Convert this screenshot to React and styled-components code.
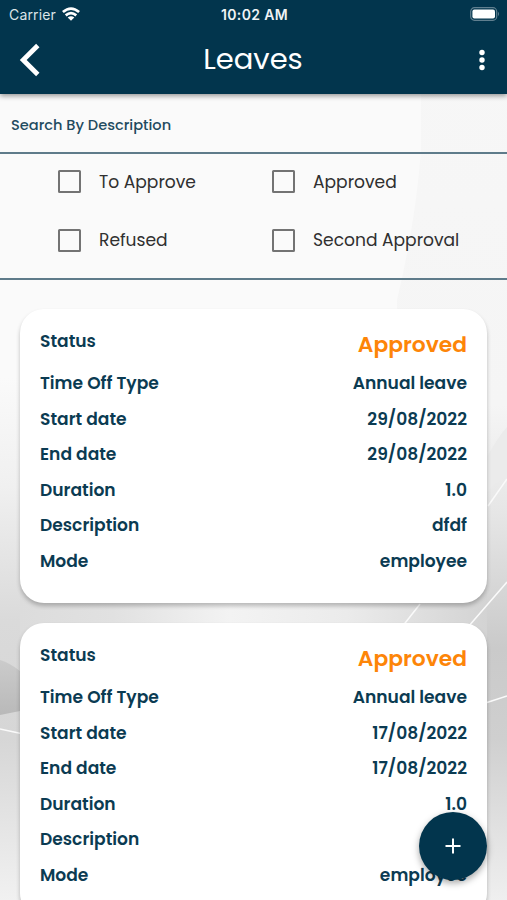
import React from 'react';
import styled, {createGlobalStyle} from 'styled-components';

const GlobalStyle = createGlobalStyle`
  * {
    box-sizing: border-box;
  }

  body {
    margin: 0;
    background-color: #FAFAFA;
    font-family: Poppins, Inter, "Open Sans", sans-serif;
  }
`;

const Screen = styled.div`
  position: relative;
  height: 900px;
  overflow: hidden;
  display: flex;
  flex-direction: column;
`;

const Backdrop = styled.svg`
  position: absolute;
  top: 0;
  left: 0;
  width: 507px;
  height: 900px;
`;

const Header = styled.div`
  position: relative;
  height: 94px;
  flex: none;
  background-color: #02354D;
  color: white;
  box-shadow: 0 2px 5px rgba(0, 0, 0, 0.4);
`;

const StatusBar = styled.div`
  height: 28px;
  padding: 0 7px 0 9px;
  display: grid;
  grid-template-columns: 1fr auto 1fr;
  align-items: center;
  font-family: Inter, Roboto, sans-serif;
`;

const Carrier = styled.div`
  display: flex;
  align-items: center;
  gap: 6px;
  font-size: 14px;
  letter-spacing: 0.15px;
  color: #DCE4E8;
`;

const Clock = styled.div`
  font-size: 14px;
  font-weight: 600;
  letter-spacing: 0.35px;
  color: #F0F3F5;
`;

const BatteryIcon = styled.svg`
  justify-self: end;
`;

const TitleBar = styled.div`
  height: 62px;
  padding: 1px 20px 0 19px;
  display: grid;
  grid-template-columns: 1fr auto 1fr;
  align-items: center;
`;

const Title = styled.div`
  font-size: 29px;
`;

const MenuIcon = styled.svg`
  justify-self: end;
`;

const Search = styled.div`
  position: relative;
  height: 60px;
  flex: none;
  padding: 4px 11px 0;
  display: flex;
  align-items: center;
  border-bottom: 2px solid #5E7B8A;
  font-size: 14.6px;
  font-weight: 500;
  color: #1F4B60;
`;

const Filters = styled.div`
  position: relative;
  height: 126px;
  flex: none;
  padding: 0 0 9px 58px;
  display: grid;
  grid-template-columns: 214px 1fr;
  grid-template-rows: 55px 62px;
  align-items: center;
  border-bottom: 2px solid #5E7B8A;
`;

const Filter = styled.div`
  display: flex;
  align-items: center;
  gap: 18px;
  font-size: 17.1px;
  color: #303030;
`;

const CheckBox = styled.span`
  width: 23px;
  height: 23px;
  border: 2px solid #737373;
  border-radius: 1.5px;
`;

const List = styled.div`
  position: relative;
  padding: 29px 20px 0;
  display: flex;
  flex-direction: column;
  gap: 20px;
`;

const Card = styled.div`
  height: 294px;
  flex: none;
  padding: 19px 20px;
  background-color: white;
  border-radius: 24px;
  box-shadow: 0 3px 4px rgba(0, 0, 0, 0.24);
`;

const StatusRow = styled.div`
  height: 37.6px;
  display: flex;
  justify-content: space-between;
`;

const Row = styled.div`
  height: 35.45px;
  display: flex;
  align-items: center;
  justify-content: space-between;
`;

const Text = styled.div`
  font-size: 17.1px;
  font-weight: 600;
  line-height: 26px;
  color: #0B3B52;
`;

const Status = styled(Text)`
  font-size: 21.8px;
  line-height: 34px;
  color: #FD8508;
`;

const AddButton = styled.button`
  position: absolute;
  right: 20px;
  bottom: 20px;
  width: 68px;
  height: 68px;
  padding: 0;
  display: flex;
  align-items: center;
  justify-content: center;
  border: none;
  border-radius: 50%;
  background-color: #02354D;
  box-shadow: 0 3px 7px rgba(0, 0, 0, 0.35);
`;

const filters = ['To Approve', 'Approved', 'Refused', 'Second Approval'];

const leaves = [
    {date: '29/08/2022', description: 'dfdf'},
    {date: '17/08/2022', description: ''},
];

const Background = () => (
    <Backdrop viewBox="0 0 507 900">
        <defs>
            <linearGradient id="base" x1="0" y1="0" x2="0" y2="1">
                <stop offset="0.42" stopColor="#FAFAFA" />
                <stop offset="0.54" stopColor="#F0F0F0" />
                <stop offset="0.69" stopColor="#DADADA" />
                <stop offset="0.82" stopColor="#D6D6D6" />
                <stop offset="1" stopColor="#F1F1F1" />
            </linearGradient>
            <linearGradient id="side" x1="0" y1="0" x2="0" y2="1">
                <stop offset="0" stopColor="#F7F7F7" />
                <stop offset="0.45" stopColor="#F5F5F5" />
                <stop offset="0.57" stopColor="#E6E6E6" />
                <stop offset="0.72" stopColor="#CACACA" />
                <stop offset="0.82" stopColor="#CFCFCF" />
                <stop offset="1" stopColor="#EFEFEF" />
            </linearGradient>
            <linearGradient id="band" x1="0" y1="0" x2="1" y2="0">
                <stop offset="0" stopColor="#DCDCDC" />
                <stop offset="0.2" stopColor="#E1E1E1" />
                <stop offset="0.45" stopColor="#F3F3F3" />
                <stop offset="0.7" stopColor="#EBEBEB" />
                <stop offset="1" stopColor="#D3D3D3" />
            </linearGradient>
            <linearGradient id="hill" x1="0" y1="0" x2="0" y2="1">
                <stop offset="0" stopColor="#CBCBCB" />
                <stop offset="1" stopColor="#B9B9B9" />
            </linearGradient>
        </defs>
        <rect width="507" height="900" fill="url(#base)" />
        <path d="M421 0V150Q416 220 397 300V900H507V0Z" fill="url(#side)" />
        <rect x="20" y="590" width="467" height="50" fill="url(#band)" />
        <path d="M0 660Q10 663 20 671V711Q10 713 0 715Z" fill="url(#hill)" />
        <path d="M507 427Q498 437 487 457V492L507 474Z" fill="#EBEBEB" />
        <path d="M0 729L21 733.5M507 479L488 506M420 604L402 627M507 582L468 627M487 702.5L507 696" fill="none" stroke="#FAFAFA" strokeWidth="1.5" />
    </Backdrop>
);

const Wifi = () => (
    <svg width="18" height="14" viewBox="0 0 18 14" fill="none" stroke="white" strokeWidth="2.7">
        <path d="M0.9 5.1Q9 -1.9 17.1 5.1M3.7 8.4Q9 4 14.3 8.4" />
        <path d="M9 13.8L5.7 10.6Q9 8 12.3 10.6Z" fill="white" stroke="none" />
    </svg>
);

const Battery = () => (
    <BatteryIcon width="30" height="14" viewBox="0 0 30 14">
        <rect x="0.7" y="0.7" width="26" height="12.6" rx="3.8" fill="none" stroke="#607F8F" strokeWidth="1.2" />
        <rect x="2.4" y="2.4" width="22.6" height="9.2" rx="2" fill="white" />
        <path d="M28 4.8Q30 7 28 9.2Z" fill="#607F8F" />
    </BatteryIcon>
);

const Leave = ({leave}) => (
    <Card>
        <StatusRow>
            <Text>Status</Text>
            <Status>Approved</Status>
        </StatusRow>
        <Row>
            <Text>Time Off Type</Text>
            <Text>Annual leave</Text>
        </Row>
        <Row>
            <Text>Start date</Text>
            <Text>{leave.date}</Text>
        </Row>
        <Row>
            <Text>End date</Text>
            <Text>{leave.date}</Text>
        </Row>
        <Row>
            <Text>Duration</Text>
            <Text>1.0</Text>
        </Row>
        <Row>
            <Text>Description</Text>
            <Text>{leave.description}</Text>
        </Row>
        <Row>
            <Text>Mode</Text>
            <Text>employee</Text>
        </Row>
    </Card>
);

export default function App() {
    return (
        <Screen>
            <GlobalStyle />
            <Background />
            <Header>
                <StatusBar>
                    <Carrier>Carrier <Wifi /></Carrier>
                    <Clock>10:02 AM</Clock>
                    <Battery />
                </StatusBar>
                <TitleBar>
                    <svg width="22" height="34" viewBox="0 0 22 34">
                        <path d="M18.8 2.5L4.2 17L18.8 31.5" fill="none" stroke="white" strokeWidth="4.8" />
                    </svg>
                    <Title>Leaves</Title>
                    <MenuIcon width="10" height="22" viewBox="0 0 10 22" fill="white">
                        <circle cx="5" cy="3.5" r="2.7" />
                        <circle cx="5" cy="11" r="2.7" />
                        <circle cx="5" cy="18.5" r="2.7" />
                    </MenuIcon>
                </TitleBar>
            </Header>
            <Search>Search By Description</Search>
            <Filters>
                {filters.map(name => (
                    <Filter key={name}>
                        <CheckBox />
                        {name}
                    </Filter>
                ))}
            </Filters>
            <List>
                {leaves.map(leave => <Leave key={leave.date} leave={leave} />)}
            </List>
            <AddButton>
                <svg width="16" height="16" viewBox="0 0 16 16">
                    <path d="M8 0.5V15.5M0.5 8H15.5" stroke="white" strokeWidth="2" />
                </svg>
            </AddButton>
        </Screen>
    );
}
